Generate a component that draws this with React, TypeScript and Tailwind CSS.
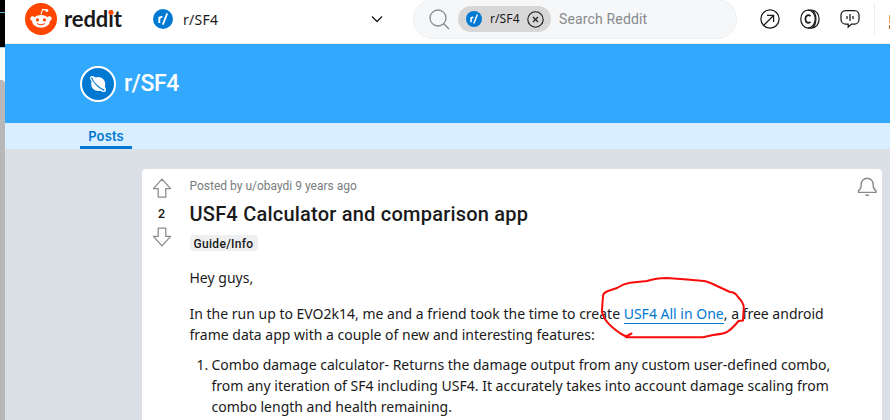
import type { ReactNode } from 'react';

function SubBadge({ size }: { size: number }) {
  return (
    <svg width={size} height={size} viewBox="0 0 20 20" className="shrink-0">
      <circle cx="10" cy="10" r="10" fill="#0079d3" />
      <path d="M6.3 14V7.8M6.3 10.1c.2-1.6 1.3-2.3 3-2.1" fill="none" stroke="#fff" strokeWidth="1.9" />
      <path d="M9.8 15.6 14.2 4.3" stroke="#fff" strokeWidth="1.8" />
    </svg>
  );
}

function RedditLogo() {
  return (
    <svg width="32" height="32" viewBox="0 0 32 32" className="shrink-0">
      <circle cx="16" cy="16" r="16" fill="#ff4500" />
      <path d="m16 11.5 1.6-5.1 4.5 1" fill="none" stroke="#fff" strokeWidth="1.1" strokeLinejoin="round" />
      <circle cx="21.9" cy="7.5" r="1.5" fill="#fff" />
      <circle cx="7.6" cy="15.6" r="2.3" fill="#fff" />
      <circle cx="24.4" cy="15.6" r="2.3" fill="#fff" />
      <ellipse cx="16" cy="18.4" rx="8.8" ry="6.3" fill="#fff" />
      <circle cx="12.5" cy="16.9" r="1.6" fill="#ff4500" />
      <circle cx="19.5" cy="16.9" r="1.6" fill="#ff4500" />
      <path d="M12.4 20.7c2 1.5 5.2 1.5 7.2 0" fill="none" stroke="#ff4500" strokeWidth="1" strokeLinecap="round" />
    </svg>
  );
}

function HeaderIcon({ children }: { children: ReactNode }) {
  return (
    <svg width="20" height="20" viewBox="0 0 20 20" fill="none" stroke="#1a1a1b" strokeWidth="1.25" className="shrink-0">
      {children}
    </svg>
  );
}

function VoteArrow({ down = false }: { down?: boolean }) {
  return (
    <svg width="20" height="20" viewBox="0 0 20 20" fill="none" stroke="#878a8c" strokeWidth="1.25" strokeLinejoin="round" className={down ? 'rotate-180' : ''}>
      <path d="M10 1.1 18.6 10.6H13.8V19H6.2V10.6H1.4Z" />
    </svg>
  );
}

function Header() {
  return (
    <header className="flex h-11 w-full items-start border-b border-[#edeff1] bg-white pl-5">
      <div className="mt-[3px] flex h-8 w-[97px] items-center">
        <RedditLogo />
        <div className="ml-[7px] flex font-['Lato'] text-[22px] leading-8 font-bold tracking-[-0.1px] text-[#1a1a1b]">
          redd
          <span className="relative">
            i
            <span className="absolute top-[7px] left-1/2 size-[5px] -translate-x-1/2 rounded-full bg-[#ff4500]" />
          </span>
          t
        </div>
      </div>
      <div className="mt-[9px] ml-[31px] flex h-5 w-[230px] items-center">
        <SubBadge size={20} />
        <span className="mt-0.5 ml-2.5 text-[14px] leading-5 tracking-[0.25px] text-[#1a1a1b]">r/SF4</span>
        <svg width="12" height="8" viewBox="0 0 12 8" className="ml-auto">
          <path d="m1 1.5 5 5 5-5" fill="none" stroke="#1a1a1b" strokeWidth="1.3" />
        </svg>
      </div>
      <div className="-mt-px ml-[30px] flex h-10 w-[324px] items-center rounded-full border border-[#edeff1] bg-[#f6f7f8] pl-[15px]">
        <svg width="21" height="21" viewBox="0 0 21 21" fill="none" stroke="#878a8c" strokeWidth="1.3">
          <circle cx="9" cy="9" r="8" />
          <path d="m14.7 14.7 5.3 5.3" />
        </svg>
        <div className="ml-2 flex h-[26px] w-[93px] items-center rounded-full bg-[#d7d7d7] pl-2">
          <SubBadge size={16} />
          <span className="ml-2 w-[29px] text-[12px] leading-5 tracking-[0.1px] text-[#1a1a1b]">r/SF4</span>
          <svg width="17" height="17" viewBox="0 0 17 17" fill="none" stroke="#1a1a1b" strokeWidth="1.1" className="ml-2">
            <circle cx="8.5" cy="8.5" r="7.7" />
            <path d="m6 6 5 5m0-5-5 5" />
          </svg>
        </div>
        <span className="ml-2 font-['Roboto'] text-[14px] tracking-[0.15px] whitespace-nowrap text-[#878a8c]">Search Reddit</span>
      </div>
      <div className="mt-[9px] ml-[23px] flex gap-5">
        <HeaderIcon>
          <circle cx="10" cy="10" r="9.1" />
          <path d="m3.8 16.2 9.5-9.5M7 6.4h6.6V13" />
        </HeaderIcon>
        <HeaderIcon>
          <ellipse cx="8" cy="10" rx="7.2" ry="9" />
          <path d="M8 1h3.7c4.2 0 7.4 4 7.4 9s-3.2 9-7.4 9H8M12 1.2c5.2 3.2 5.2 14.4 0 17.6" />
          <path d="M10.4 7.2c-1.5-2-5-1.2-5 2.8s3.5 4.8 5 2.8" strokeWidth="1.8" />
        </HeaderIcon>
        <HeaderIcon>
          <path d="M5.5 1.5h9a4.5 4.5 0 0 1 4.5 4.5v4.5a4.5 4.5 0 0 1-4.5 4.5h-3l-3.3 3V15H5.5A4.5 4.5 0 0 1 1 10.5V6a4.5 4.5 0 0 1 4.5-4.5Z" />
          <path d="M7 7v3M10 5v7M13 7v3" />
        </HeaderIcon>
      </div>
      <div className="mt-[3px] ml-[14px] h-8 w-px bg-[#edeff1]" />
      <div className="mt-[15px] ml-[14px] flex h-3.5 w-px flex-col justify-between">
        <div className="h-2 bg-[#e3a052]" />
        <div className="h-1 bg-[#bd741c]" />
      </div>
    </header>
  );
}

function Banner() {
  return (
    <>
      <div className="flex h-[79px] items-center bg-[#33a8ff] pl-[75px]">
        <svg width="36" height="36" viewBox="0 0 36 36" className="shrink-0">
          <circle cx="18" cy="18" r="17" fill="#0079d3" stroke="#fff" strokeWidth="2" />
          <circle cx="18.2" cy="18" r="7.1" fill="#fff" />
          <g transform="rotate(45 18 18)">
            <ellipse cx="18" cy="18" rx="9.8" ry="2.7" fill="none" stroke="#fff" strokeWidth="1.4" />
            <path d="M10 17.4C13 15.9 22 15.7 26 17.5" fill="none" stroke="#fff" strokeWidth="2.6" />
            <path d="M9.4 18.1C12.3 20.1 22.5 20.3 26.4 18" fill="none" stroke="#0079d3" strokeWidth="1.1" />
          </g>
        </svg>
        <h1 className="ml-2 font-['Roboto'] text-[23px] leading-8 font-medium tracking-[-0.35px] text-white">r/SF4</h1>
      </div>
      <nav className="flex h-[26px] bg-[#d9efff] pl-[75px]">
        <div className="flex h-[26px] w-[52px] justify-center border-b-[3px] border-[#0079d3] font-['Inter'] text-[13px] leading-[26px] font-semibold tracking-[0.15px] text-[#0079d3]">Posts</div>
      </nav>
    </>
  );
}

function Post() {
  return (
    <article className="relative flex h-[251px] w-[740px] rounded-t bg-white text-[#1a1a1b]">
      <div className="flex w-[39px] flex-col items-center pt-[9px]">
        <VoteArrow />
        <span className="mb-1 h-[25px] pt-1.5 font-['Inter'] text-[12px] leading-5 font-semibold">2</span>
        <VoteArrow down />
      </div>
      <div className="w-[660px] pl-[8.5px]">
        <p className="mt-[9px] font-['Roboto'] text-[12px] leading-4 text-[#787c7e]">Posted by u/obaydi 9 years ago</p>
        <h2 className="mt-2 font-['Roboto'] text-[20px] leading-6 font-medium tracking-[0.22px]">USF4 Calculator and comparison app</h2>
        <div className="mt-[9px] flex h-4 w-[68px] items-center justify-center rounded-sm bg-[#edeff1] pt-0.5 font-['Roboto'] text-[12px] leading-4 font-medium tracking-[0.3px] whitespace-nowrap">Guide/Info</div>
        <div className="mt-4 text-[14px] leading-[21px]">
          <p>Hey guys,</p>
          <p className="mt-[15px] whitespace-nowrap">
            In the run up to EVO2k14, me and a friend took the time to create{' '}
            <a className="border-b border-[#0079d3] text-[#0079d3]">USF4 All in One</a>, a free android<br />
            frame data app with a couple of new and interesting features:
          </p>
          <ol className="mt-[9px] flex whitespace-nowrap">
            <li className="flex">
              <span className="w-[22px] pl-[7px]">1.</span>
              <span>
                Combo damage calculator- Returns the damage output from any custom user-defined combo,<br />
                from any iteration of SF4 including USF4. It accurately takes into account damage scaling from<br />
                combo length and health remaining.
              </span>
            </li>
          </ol>
        </div>
      </div>
      <svg width="20" height="20" viewBox="0 0 20 20" fill="none" stroke="#878a8c" strokeWidth="1.4" className="mt-[8px] ml-4 shrink-0">
        <path d="M1.4 15.4v-1.6c1.8-1.2 2.8-2.8 2.8-5.2V7.2a6 6 0 0 1 12 0v1.4c0 2.4 1 4 2.8 5.2v1.6Z" strokeLinejoin="round" />
        <path d="M7.8 17.6h4.8c-.8 2.2-4 2.2-4.8 0Z" fill="#878a8c" stroke="none" />
      </svg>
      <svg width="146" height="66" viewBox="600 275 146 66" fill="none" stroke="#fa0b0b" strokeWidth="2" strokeLinecap="round" strokeLinejoin="round" className="pointer-events-none absolute top-[106px] left-[458px]">
        <path d="M631.5 333.5 626 336.5 620.5 333.5C611 327 602 319 602 310L603 296Q603 293 608 291L617 288Q623 284 630 282.8L647 281Q656 278 667 278L687 279.5L704 281Q708 281.5 717 286L730 292Q735 292 738 297Q744 303 743.8 308L743 320.5L738.5 321Q732 329 727 332Q723 334 713 335L703 337.3H626" />
      </svg>
    </article>
  );
}

export default function App() {
  return (
    <div className="flex h-[420px] w-[890px] overflow-hidden bg-[#dae0e6] font-['Noto_Sans',sans-serif]">
      <aside className="flex w-[5px] shrink-0 flex-col bg-white">
        <div className="h-[47px] bg-black pt-3"><div className="h-px bg-[#58bddb]" /></div>
        <div className="h-px bg-[#9ccfdd]" />
        <div className="mt-8 flex-1 rounded-tr-sm bg-[#b8b8b8]" />
      </aside>
      <div className="w-[885px] shrink-0">
        <Header />
        <Banner />
        <main className="pt-5 pl-[137px]"><Post /></main>
      </div>
    </div>
  );
}
